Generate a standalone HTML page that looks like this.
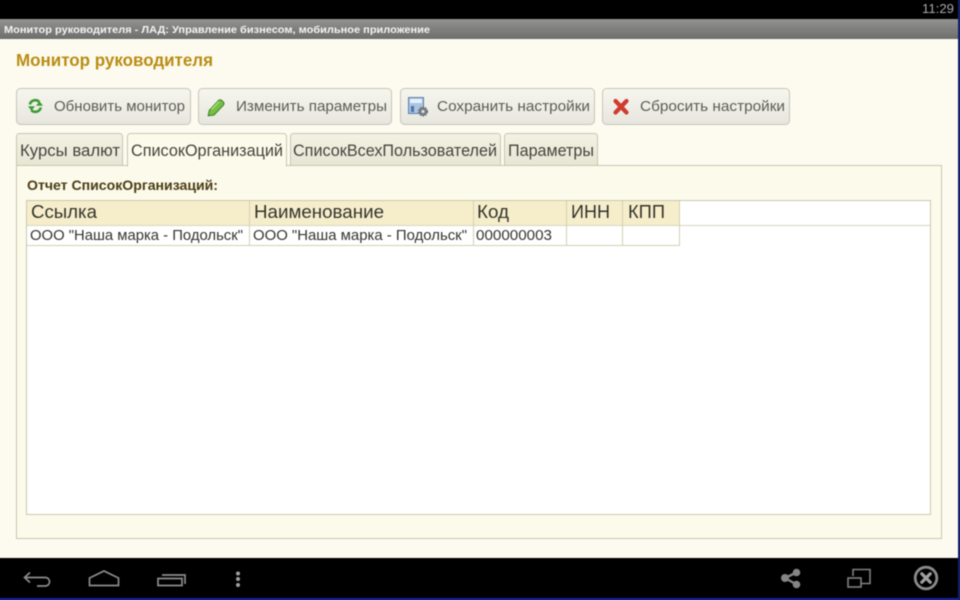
<!DOCTYPE html>
<html lang="ru"><head><meta charset="utf-8"><title>Монитор руководителя</title>
<style>
html,body{margin:0;padding:0;width:960px;height:600px;overflow:hidden;background:#000}
#clip{position:relative;width:960px;height:600px;overflow:hidden;contain:paint}
svg{display:block;position:absolute;left:-10px;top:-10px;filter:blur(.4px)}
text{font-family:"Liberation Sans",sans-serif}
</style></head><body>
<div id="clip">
<svg width="980" height="620" viewBox="-10 -10 980 620" xmlns="http://www.w3.org/2000/svg">
<defs>
<linearGradient id="tb" x1="0" y1="0" x2="0" y2="1"><stop offset="0" stop-color="#939391"/><stop offset="1" stop-color="#6d6d6b"/></linearGradient>
<linearGradient id="btn" x1="0" y1="0" x2="0" y2="1"><stop offset="0" stop-color="#f7f6ee"/><stop offset="1" stop-color="#e6e6df"/></linearGradient>
<linearGradient id="tab" x1="0" y1="0" x2="0" y2="1"><stop offset="0" stop-color="#f4f2e4"/><stop offset="1" stop-color="#e7e5d4"/></linearGradient>
</defs>
<rect x="-10" y="-10" width="980" height="620" fill="#fdfbef"/>
<rect x="-10" y="-10" width="980" height="29" fill="#000"/>
<rect x="-10" y="19" width="980" height="20" fill="url(#tb)"/>
<text x="922" y="13" font-size="12.500" fill="#a8a8a8" textLength="32" lengthAdjust="spacingAndGlyphs">11:29</text>
<text x="4" y="33" font-size="10.500" font-weight="bold" fill="#f4f4f4" textLength="426" lengthAdjust="spacingAndGlyphs">Монитор руководителя - ЛАД: Управление бизнесом, мобильное приложение</text>
<text x="16" y="66" font-size="17.500" font-weight="bold" fill="#b98d14" textLength="197" lengthAdjust="spacingAndGlyphs">Монитор руководителя</text>

<g fill="url(#btn)" stroke="#c6c5b8">
<rect x="16.500" y="88.500" width="174" height="36" rx="4"/>
<rect x="198.500" y="88.500" width="193" height="36" rx="4"/>
<rect x="400.500" y="88.500" width="194" height="36" rx="4"/>
<rect x="602.500" y="88.500" width="187" height="36" rx="4"/>
</g>
<g font-size="15" fill="#5c5c55">
<text x="54" y="111" textLength="131" lengthAdjust="spacingAndGlyphs">Обновить монитор</text>
<text x="236" y="111" textLength="151" lengthAdjust="spacingAndGlyphs">Изменить параметры</text>
<text x="437" y="111" textLength="153" lengthAdjust="spacingAndGlyphs">Сохранить настройки</text>
<text x="640" y="111" textLength="145" lengthAdjust="spacingAndGlyphs">Сбросить настройки</text>
</g>
<!-- refresh icon -->
<g fill="none" stroke="#3c9a34" stroke-width="2.600">
<path d="M29.800 104.500a5.600 5.600 0 0 1 9.500-2.600"/><path d="M40.800 107.500a5.600 5.600 0 0 1-9.500 2.600"/>
</g>
<path d="M43 105.800h-7l3.500-4.500zM28 106.200h7l-3.500 4.500z" fill="#3c9a34"/>
<!-- pencil icon -->
<path d="M209.200 110.500l9.300-10c1-1 2.200-1 3.300 0l1.500 1.500c1 1.200 1 2.200 0 3.300l-9.300 9.700-5.800 .8z" fill="#73c042" stroke="#3e7d28"/>
<path d="M211.500 109.500l7.500-8" stroke="#a9e07c" stroke-width="1.500" fill="none"/>
<!-- save/settings icon -->
<rect x="408.500" y="97.500" width="15" height="16" fill="#a9c4e4" stroke="#5c7fae"/>
<rect x="410" y="99" width="12" height="4" fill="#e9f0f8"/>
<rect x="411" y="106" width="3" height="6" fill="#4d74a6"/>
<circle cx="423" cy="111.500" r="4" fill="#7c8088" stroke="#666a72" stroke-width="2" stroke-dasharray="1.600 1"/>
<circle cx="423" cy="111.500" r="1.500" fill="#e6e6e0"/>
<!-- x icon -->
<path d="M615.500 101l11 11.500M626.500 101l-11 11.500" stroke="#cf3b2f" stroke-width="4.200" stroke-linecap="round"/>

<!-- panel -->
<rect x="16.500" y="165.500" width="925" height="373" fill="#fcfaea" stroke="#c8c6ae"/>
<!-- tabs -->
<g fill="url(#tab)" stroke="#c8c6ae">
<path d="M16.500 165.500v-29a3 3 0 0 1 3-3h100a3 3 0 0 1 3 3v29z"/>
<path d="M290.500 165.500v-29a3 3 0 0 1 3-3h204a3 3 0 0 1 3 3v29z"/>
<path d="M504.500 165.500v-29a3 3 0 0 1 3-3h87a3 3 0 0 1 3 3v29z"/>
</g>
<path d="M127.500 166v-29.500a3 3 0 0 1 3-3h153a3 3 0 0 1 3 3v29.500z" fill="#fcfaea" stroke="#c8c6ae"/>
<rect x="128" y="165" width="158" height="2" fill="#fcfaea"/>
<g font-size="16.500" fill="#44443c">
<text x="20" y="156" textLength="100" lengthAdjust="spacingAndGlyphs">Курсы валют</text>
<text x="131" y="156" textLength="152" lengthAdjust="spacingAndGlyphs">СписокОрганизаций</text>
<text x="293" y="156" textLength="204" lengthAdjust="spacingAndGlyphs">СписокВсехПользователей</text>
<text x="508" y="156" textLength="86" lengthAdjust="spacingAndGlyphs">Параметры</text>
</g>
<text x="27" y="190" font-size="13.500" font-weight="bold" fill="#4b3c14" textLength="191" lengthAdjust="spacingAndGlyphs">Отчет СписокОрганизаций:</text>

<!-- table -->
<rect x="26.500" y="200.500" width="904" height="314" fill="#fff" stroke="#c9c7ae"/>
<rect x="27" y="201" width="652" height="24" fill="#f6eecb"/>
<rect x="27" y="225" width="903" height="1" fill="#d8d5bc"/>
<g stroke="#d3cfb2">
<path d="M249.500 201v44M473.500 201v44M566.500 201v44M622.500 201v44M679.500 201v44"/>
<path d="M27 245.500h653"/>
</g>
<g font-size="18.500" fill="#34342e">
<text x="31" y="218" textLength="66" lengthAdjust="spacingAndGlyphs">Ссылка</text>
<text x="254" y="218" textLength="130" lengthAdjust="spacingAndGlyphs">Наименование</text>
<text x="477" y="218" textLength="32" lengthAdjust="spacingAndGlyphs">Код</text>
<text x="571" y="218" textLength="39" lengthAdjust="spacingAndGlyphs">ИНН</text>
<text x="628" y="218" textLength="37" lengthAdjust="spacingAndGlyphs">КПП</text>
</g>
<g font-size="14.500" fill="#34342e">
<text x="30" y="240" textLength="213" lengthAdjust="spacingAndGlyphs">ООО "Наша марка - Подольск"</text>
<text x="253" y="240" textLength="214" lengthAdjust="spacingAndGlyphs">ООО "Наша марка - Подольск"</text>
<text x="476" y="240" textLength="76" lengthAdjust="spacingAndGlyphs">000000003</text>
</g>

<!-- bottom bar -->
<rect x="-10" y="558" width="980" height="40" fill="#000"/>
<rect x="-10" y="598" width="980" height="12" fill="#12249a"/>
<g fill="none" stroke="#8c8c8c" stroke-width="1.700">
<path d="M25 577.500h20c6 0 6 8.500 0 8.500h-8"/><path d="M30 572.500l-5.500 5 5.500 5"/>
<path d="M89.500 585.500v-7.500l14.500-7 14.500 7v7.500z"/>
<path d="M158 578.500h24v7h-24z"/><path d="M162 575h23v9"/>
</g>
<g fill="#a0a0a0"><circle cx="238" cy="573.500" r="2"/><circle cx="238" cy="579" r="2"/><circle cx="238" cy="585" r="2"/></g>
<g fill="#858585"><circle cx="785" cy="578" r="4"/><circle cx="796.500" cy="572.500" r="3.800"/><circle cx="796.500" cy="584.500" r="3.800"/></g>
<path d="M785 578l11.500-5.500M785 578l11.500 6.500" stroke="#858585" stroke-width="2.400"/>
<g fill="none" stroke="#808080" stroke-width="1.600">
<path d="M853 576v-6.500h17v14h-9"/><rect x="848" y="578" width="13" height="9"/>
</g>
<circle cx="926" cy="578" r="10.800" fill="none" stroke="#8a8a8a" stroke-width="2.800"/>
<path d="M921.800 573.800l8.400 8.400M930.200 573.800l-8.400 8.400" stroke="#a0a0a0" stroke-width="3.200" stroke-linecap="round"/>
<!-- right edge -->
<rect x="958" y="-10" width="12" height="620" fill="#12206e"/>
</svg>
</div>
</body></html>
